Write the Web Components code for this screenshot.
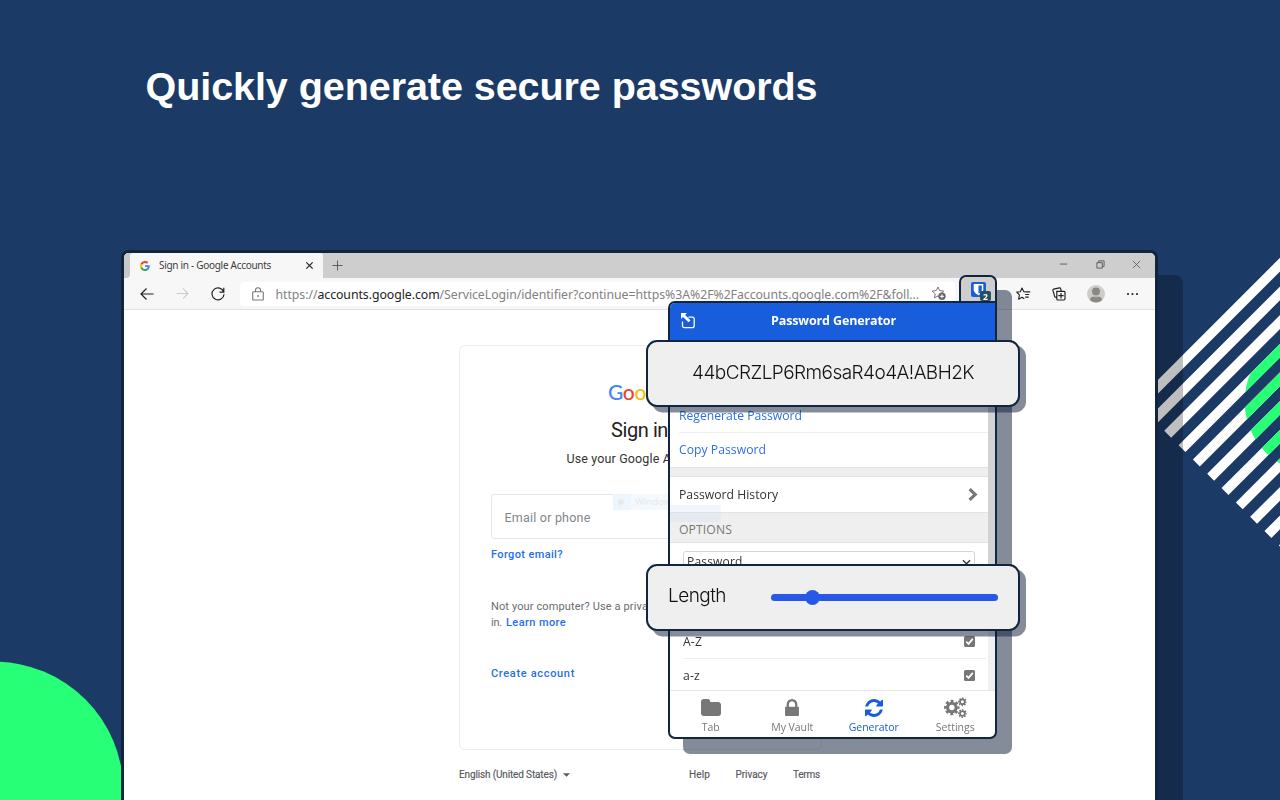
<!DOCTYPE html>
<html lang="en">
<head>
<meta charset="utf-8">
<title>Quickly generate secure passwords</title>
<style>
html,body{margin:0;width:1280px;height:800px;overflow:hidden;background:#1b3a66}
</style>
</head>
<body>
<promo-scene></promo-scene>
<script>
const define = (name, html, setup) => {
  const t = document.createElement('template');
  t.innerHTML = html;
  customElements.define(name, class extends HTMLElement {
    connectedCallback() {
      if (this.shadowRoot) return;
      this.attachShadow({mode: 'open'}).appendChild(document.importNode(t.content, true));
      if (setup) setup(this, this.shadowRoot);
    }
  });
};

/* Spaces its slotted text so that the line has the width given in "w". */
define('fit-text', `<style>:host{display:block;flex:none;white-space:nowrap}span{display:inline-block}</style><span><slot></slot></span>`,
  (el, root) => {
    const natural = root.querySelector('span').getBoundingClientRect().width;
    const n = el.textContent.length;
    el.style.letterSpacing = ((+el.getAttribute('w') - natural) / n) + 'px';
  });

const icons = {
  google: ['0 0 48 48', '<path fill="#ea4335" d="M24 9.5c3.54 0 6.71 1.22 9.21 3.6l6.85-6.85C35.9 2.38 30.47 0 24 0 14.62 0 6.51 5.38 2.56 13.22l7.98 6.19C12.43 13.72 17.74 9.5 24 9.5z"/><path fill="#4285f4" d="M46.98 24.55c0-1.57-.15-3.09-.38-4.55H24v9.02h12.94c-.58 2.96-2.26 5.48-4.78 7.18l7.73 6c4.51-4.18 7.09-10.36 7.09-17.65z"/><path fill="#fbbc05" d="M10.53 28.59c-.48-1.45-.76-2.99-.76-4.59s.27-3.14.76-4.59l-7.98-6.19C.92 16.46 0 20.12 0 24c0 3.88.92 7.54 2.56 10.78l7.97-6.19z"/><path fill="#34a853" d="M24 48c6.48 0 11.93-2.13 15.89-5.81l-7.73-6c-2.15 1.45-4.92 2.3-8.16 2.3-6.26 0-11.57-4.22-13.47-9.91l-7.98 6.19C6.51 42.62 14.62 48 24 48z"/>'],
  close: ['0 0 10 10', '<path d="M1.5 1.5l7 7M8.500 1.500l-7 7" stroke="currentColor" fill="none" stroke-width="1.300"/>'],
  plus: ['0 0 12 12', '<path d="M6 .5v11M.5 6h11" stroke="currentColor" fill="none"/>'],
  min: ['0 0 10 10', '<path d="M1 4.500h8" stroke="currentColor" fill="none"/>'],
  restore: ['0 0 10 10', '<path d="M1 3h6v6H1zM3 3V1h6v6H7" stroke="currentColor" fill="none"/>'],
  x: ['0 0 10 10', '<path d="M1 1l8 8M9 1L1 9" stroke="currentColor" fill="none" stroke-width=".9"/>'],
  back: ['0 0 14 12', '<path d="M13.500 6H1M6.500 .5L1 6l5.500 5.500" stroke="currentColor" fill="none" stroke-width="1.200"/>'],
  fwd: ['0 0 14 12', '<path d="M.5 6H13M7.500 .5L13 6l-5.500 5.500" stroke="currentColor" fill="none" stroke-width="1.200"/>'],
  reload: ['0 0 14 14', '<path d="M12.700 5A6 6 0 1 0 13 7.200M12.800 .8v4.300H8.500" stroke="currentColor" fill="none" stroke-width="1.200"/>'],
  padlock: ['0 0 12 14', '<path d="M1.500 4.800h9a.8.8 0 0 1 .8.800v6.600a.8.8 0 0 1-.8.800h-9a.8.8 0 0 1-.8-.8V5.600a.8.8 0 0 1 .8-.8zM3.500 4.800V3.300a2.500 2.500 0 0 1 5 0v1.500" stroke="currentColor" fill="none" stroke-width="1.100"/><circle cx="6" cy="9" r=".9" fill="currentColor"/>'],
  staradd: ['0 0 15 15', '<path d="M6.500 1l1.700 3.600 4.100.5-3 2.800.8 4-3.600-2-3.600 2 .8-4-3-2.800 4.100-.5z" stroke="currentColor" fill="none" stroke-width="1" stroke-linejoin="round"/><circle cx="10.500" cy="10.300" r="3.700" fill="#666"/><path d="M10.500 8.300v4M8.500 10.300h4" stroke="#fff" stroke-width="1"/>'],
  favs: ['0 0 15 14', '<path d="M9 4.900L7.800 4.700 6 1 4.300 4.700.7 5.100l2.700 2.700-.8 4.400L6 10.200l2.300 1.500M9.200 4.900h5M9.200 7.500h4M9.200 10.100h3.500" stroke="currentColor" fill="none" stroke-width="1.100" stroke-linejoin="round"/>'],
  collect: ['0 0 14 14', '<path d="M4.800 4.300h7.200a1 1 0 0 1 1 1v6.500a1.200 1.200 0 0 1-1.200 1.200H5.800a1 1 0 0 1-1-1zM9 6v5.400M6.300 8.700h5.400M4.500 10.500L2.800 9.900 .9 3.400a1 1 0 0 1 .7-1.200L7.400.9a1 1 0 0 1 1.200.7l.7 2.500" stroke="currentColor" fill="none" stroke-width="1.200"/>'],
  avatar: ['0 0 18 18', '<circle cx="9" cy="9" r="9" fill="#cfcdca"/><circle cx="9" cy="6.400" r="4" fill="#8b8886"/><path d="M3 15.300c0-2.500 1.500-3.600 3-3.600h6c1.500 0 3 1.100 3 3.600A9 9 0 0 1 9 17.300a9 9 0 0 1-6-2z" fill="#8b8886"/>'],
  dots: ['0 0 12 4', '<g fill="currentColor"><circle cx="1.500" cy="2" r="1.100"/><circle cx="6" cy="2" r="1.100"/><circle cx="10.500" cy="2" r="1.100"/></g>'],
  shield: ['0 0 15 15', '<rect width="15" height="15" rx="2" fill="#175ddc"/><path d="M2.700 2h9.600v5.800c0 2.700-2.800 4.300-4.800 5.400C5.500 12.100 2.700 10.500 2.700 7.800z" fill="#fff"/><path d="M7.500 3.400h3.300v4.500c0 1.700-1.500 2.900-3.300 3.800z" fill="#175ddc"/>'],
  popout: ['0 0 16 16', '<path d="M8.500 4.100h3.800a1.900 1.900 0 0 1 1.900 1.900v6.700a1.900 1.900 0 0 1-1.900 1.900H4.400a1.900 1.900 0 0 1-1.900-1.900V8.500" stroke="#fff" fill="none" stroke-width="1.300"/><path d="M1 0h6L5.100 1.900l5.400 5.400-2 2-5.500-5.400L1 6z" fill="#fff"/>'],
  chevron: ['0 0 10 14', '<path d="M1.600 1.600L7.300 7l-5.700 5.400" stroke="currentColor" fill="none" stroke-width="3.100"/>'],
  down: ['0 0 10 6', '<path d="M1 1l4 4 4-4" stroke="currentColor" fill="none" stroke-width="1.500"/>'],
  folder: ['64 128 1664 1408', '<path fill="currentColor" d="M1728 608v704q0 92-66 158t-158 66h-1216q-92 0-158-66t-66-158v-960q0-92 66-158t158-66h320q92 0 158 66t66 158v32h672q92 0 158 66t66 158z"/>'],
  lock: ['320 128 1152 1408', '<path fill="currentColor" d="M640 768h512v-192q0-106-75-181t-181-75-181 75-75 181v192zm832 96v576q0 40-28 68t-68 28h-960q-40 0-68-28t-28-68v-576q0-40 28-68t68-28h32v-192q0-184 132-316t316-132 316 132 132 316v192h32q40 0 68 28t28 68z"/>'],
  refresh: ['0 0 1536 1536', '<path fill="currentColor" d="M1511 928q0 5-1 7-64 268-268 434.5t-478 166.5q-146 0-282.5-55t-243.5-157l-129 129q-19 19-45 19t-45-19-19-45v-448q0-26 19-45t45-19h448q26 0 45 19t19 45-19 45l-137 137q71 66 161 102t187 36q134 0 250-65t186-179q11-17 53-117 8-23 30-23h192q13 0 22.500 9.500t9.500 22.500zm25-800v448q0 26-19 45t-45 19h-448q-26 0-45-19t-19-45 19-45l138-138q-148-137-349-137-134 0-250 65t-186 179q-11 17-53 117-8 23-30 23h-199q-13 0-22.500-9.500t-9.500-22.500v-7q65-268 270-434.500t480-166.500q146 0 284 55.500t245 156.500l130-129q19-19 45-19t45 19 19 45z"/>'],
  cogs: ['0 0 22 20', '<g fill="none" stroke="currentColor"><circle cx="7.500" cy="10" r="4.100" stroke-width="3"/><circle cx="7.500" cy="10" r="6.300" stroke-width="2.200" stroke-dasharray="2.700 2.248" stroke-dashoffset="1.350"/><circle cx="17.600" cy="4.600" r="2.300" stroke-width="1.700"/><circle cx="17.600" cy="4.600" r="3.500" stroke-width="1.400" stroke-dasharray="1.500 1.249" stroke-dashoffset=".75"/><circle cx="17.600" cy="15.800" r="2.300" stroke-width="1.700"/><circle cx="17.600" cy="15.800" r="3.500" stroke-width="1.400" stroke-dasharray="1.500 1.249" stroke-dashoffset=".75"/></g>'],
  caret: ['0 0 8 4', '<path d="M0 0h8L4 4z" fill="currentColor"/>'],
  check: ['0 0 11 11', '<rect width="11" height="11" rx="1.500" fill="#767676"/><path d="M2.300 5.700l2.200 2.200 4.300-5" stroke="#fff" fill="none" stroke-width="1.700"/>']
};
define('ui-icon', `<style>:host{display:block;flex:none}svg{display:block;overflow:visible}</style>`, (el, root) => {
  const [box, body] = icons[el.getAttribute('name')];
  root.innerHTML += `<svg viewBox="${box}" width="${el.getAttribute('w')}" height="${el.getAttribute('h')}">${body}</svg>`;
});

/* Striped square and green discs behind the window. */
define('scene-backdrop', `<style>:host{display:block;width:1280px;height:800px}svg{display:block}</style>
<svg width="1280" height="800" viewBox="0 0 1280 800">
<defs><clipPath id="s"><path id="p"/></clipPath></defs>
<g clip-path="url(#s)"><rect x="1100" y="200" width="180" height="400" fill="#fff"/><circle cx="1317" cy="401.500" r="72.300" fill="#26ff76"/></g>
<circle cx="-5.500" cy="790.500" r="128.800" fill="#26ff76"/></svg>`, (el, root) => {
  let d = '';
  for (let k = 0; k < 12; k++) {
    const x = 1135.600 + 14.320 * k, y = 402.200 + 14.320 * k;
    d += `M${x} ${y}l6.900 6.900l220-220l-6.900-6.900z`;
  }
  root.querySelector('#p').setAttribute('d', d);
});

define('browser-tabs', `<style>
:host{display:flex;height:25px;background:#cecece;font:10px "Noto Sans","Open Sans",sans-serif;color:#3c3c3c}
.edge{width:6px;background:#f7f7f7}.edge i{display:block;height:25px;background:#c8c8c8;border-radius:0 0 4px 0}
.tab{display:flex;align-items:center;width:193px;background:#f7f7f7;border-radius:3px 3px 0 0;box-sizing:border-box;padding:0 9px 0 10px}
fit-text{margin:-1px 0 0 9px}.tab .c{margin-left:auto;color:#222}
.win{margin-left:auto;display:flex;gap:27.500px;padding:7px 14px 0 0;color:#555}.p{margin:7px 0 0 9px;color:#555}
</style><div class="edge"><i></i></div><div class="tab"><ui-icon name="google" w="10" h="10"></ui-icon><fit-text w="112">Sign in - Google Accounts</fit-text><ui-icon class="c" name="close" w="9" h="9"></ui-icon></div>
<ui-icon class="p" name="plus" w="11" h="11"></ui-icon>
<div class="win"><ui-icon name="min" w="9" h="9"></ui-icon><ui-icon name="restore" w="9" h="9"></ui-icon><ui-icon name="x" w="9" h="9"></ui-icon></div>`);

define('browser-toolbar', `<style>
:host{display:flex;align-items:center;height:31px;background:#f7f7f7;border-bottom:1px solid #e2e2e2;box-sizing:content-box;padding-left:15.500px;color:#222}
.url{display:flex;align-items:center;width:715px;height:24px;background:#fff;border-radius:4px;margin-left:15px;box-sizing:border-box;padding:0 8px 0 12px;font:12.300px "Noto Sans","Open Sans",sans-serif;color:#818181}
.url fit-text{margin:1px 0 0 12px}b{font-weight:400;color:#222}
.f{margin-left:22px;color:#ccc}.r{margin-left:22px}.s{margin-left:auto;color:#777}.l{color:#777}
.more{display:flex;align-items:center;gap:21px;margin-left:61px}
</style><ui-icon name="back" w="14" h="12"></ui-icon><ui-icon class="f" name="fwd" w="13" h="11"></ui-icon><ui-icon class="r" name="reload" w="14" h="14"></ui-icon>
<div class="url"><ui-icon class="l" name="padlock" w="12" h="14"></ui-icon><fit-text w="643.500">https://<b>accounts.google.com</b>/ServiceLogin/identifier?continue=https%3A%2F%2Faccounts.google.com%2F&amp;foll...</fit-text><ui-icon class="s" name="staradd" w="16" h="15"></ui-icon></div>
<div class="more"><ui-icon name="favs" w="15" h="14"></ui-icon><ui-icon name="collect" w="14" h="14"></ui-icon><ui-icon name="avatar" w="18" h="18"></ui-icon><ui-icon name="dots" w="13" h="4"></ui-icon></div>`);

define('signin-card', `<style>
:host{display:flex;flex-direction:column;width:363px;height:405px;box-sizing:border-box;border:1px solid #ebecee;border-radius:6px;padding:0 31px;font:12px/16px Roboto,sans-serif;color:#333}
.logo{font:500 21px/24px Lato,sans-serif;color:#4285f4;margin:34px 0 0 117px;display:flex}
.logo i{font-style:normal}.r{color:#ea4335}.y{color:#fbbc05}
h1{font:400 20px/26px Roboto,sans-serif;margin:13px 0 0 120px;color:#222}
.use{margin:8px 0 0 75.500px;font-size:12.500px}
.field{position:relative;height:43px;border:1px solid #e4e6e9;border-radius:3px;margin-top:27px;font-size:12.500px;line-height:45px;padding-left:12.500px;color:#80868b}
.ghost{position:absolute;left:121px;top:-1px;width:88px;height:16px;background:#f4f9fe;color:#e6e9ec;font:9.500px/16px "Noto Sans",sans-serif;display:flex;align-items:center}
.ghost i{width:18px;height:16px;background:radial-gradient(circle at 8px 8px,#e6e9ec 2.500px,#edf6fe 3.200px);margin-right:4px}
.blue{color:#1f71e6;font-weight:500}
.forgot{margin-top:8px;font-size:11px}.priv{margin-top:36px;font-size:11px;color:#6a6d71;display:flex;gap:4px}.priv+.priv{margin-top:0}
.create{margin-top:35px;font-size:11px}
</style>
<div class="logo"><fit-text w="38">G<i class="r">o</i><i class="y">o</i></fit-text></div>
<h1><fit-text w="57">Sign in</fit-text></h1>
<div class="use"><fit-text w="104.500">Use your Google A</fit-text></div>
<div class="field"><fit-text w="86">Email or phone</fit-text><div class="ghost"><i></i>Window</div></div>
<fit-text class="forgot blue" w="72">Forgot email?</fit-text>
<div class="priv"><fit-text w="157">Not your computer? Use a priva</fit-text></div>
<div class="priv"><fit-text w="11">in.</fit-text><fit-text class="blue" w="60">Learn more</fit-text></div>
<fit-text class="create blue" w="84">Create account</fit-text>`);

define('signin-page', `<style>
:host{display:block;padding:35px 0 0 335px}
footer{display:flex;align-items:center;font:10px/12px Roboto,sans-serif;color:#55585c;margin-top:19px;-webkit-text-stroke:.15px #55585c}
.c{margin-left:6px}.h{margin-left:119px}.p{margin-left:25.500px}
</style><signin-card></signin-card>
<footer><fit-text w="98">English (United States)</fit-text><ui-icon class="c" name="caret" w="7" h="4"></ui-icon><fit-text class="h" w="21">Help</fit-text><fit-text class="p" w="32">Privacy</fit-text><fit-text class="p" w="27">Terms</fit-text></footer>`);

define('browser-window', `<style>
:host{display:block;box-sizing:border-box;width:1037px;height:570px;background:#fff;border:3px solid #12253f;border-radius:8px;overflow:hidden}
</style><browser-tabs></browser-tabs><browser-toolbar></browser-toolbar><signin-page></signin-page>`);

define('list-row', `<style>
:host{display:flex;align-items:center;box-sizing:border-box;height:34.500px;color:#333;padding:1px 11px 0 0}
:host([link]){color:#2f6fe0}
::slotted(ui-icon){margin-left:auto;color:#777}
</style><slot></slot>`);

define('nav-item', `<style>
:host{display:flex;flex-direction:column;align-items:center;flex:1;color:#777;font:10.500px/14px "Open Sans",sans-serif}
:host([active]){color:#175ddc}
.i{height:21px;display:flex;align-items:center;margin-top:6px}.t{margin-top:2px}
</style><div class="i"><slot name="icon"></slot></div><div class="t"><slot></slot></div>`);

define('generator-popup', `<style>
:host{display:flex;flex-direction:column;box-sizing:border-box;width:329px;height:438px;border:2px solid #12263f;border-radius:7px 0 7px 7px;overflow:hidden;background:#fff;font:12.200px/16px "Open Sans",sans-serif}
header{display:flex;align-items:center;height:40px;flex:none;background:#175ddc;color:#fff;font-weight:700;font-size:12.500px;padding:0 0 4px 10px;box-sizing:border-box}
header fit-text{margin-left:75px}
.body{display:flex;height:347px;flex:none}
.list{flex:1;min-width:0}
.bar{width:7px;background:#f0f0f0}.bar i{display:block;height:245px;background:#d2d2d2}
.value{height:55px}
list-row{margin-left:9px}.line{border-bottom:1px solid #eee}
.top{padding-top:3px}
.gap{height:10px;background:#efefef;border:solid #e2e2e2;border-width:1px 0;box-sizing:border-box}
.head{position:relative;height:31px;background:#efefef;border:solid #e2e2e2;border-width:1px 0;box-sizing:border-box;padding:9px 0 0 9px;color:#777;line-height:16px}
.head i{position:absolute;left:0;top:-8px;width:51px;height:17px;background:rgba(200,220,245,.25)}
.opt{padding:0 2px 0 4px}
.select{display:flex;justify-content:space-between;height:18px;border:1px solid #d5d5d5;border-radius:3px;margin:8px 11px 0 9px;padding:2px 3px 0 3px;box-sizing:border-box;color:#333;font-size:12px}
.select ui-icon{margin-top:5px}
.hidden{height:55.500px}
.h{padding-right:10px}.opt list-row.line{padding-top:2px}.opt list-row.last{padding-top:0}
nav{display:flex;flex:1;border-top:1px solid #e6e6e6;margin-right:-1px}
</style>
<header><ui-icon name="popout" w="16" h="16"></ui-icon><fit-text w="125">Password Generator</fit-text></header>
<div class="body"><div class="list">
<div class="value"></div>
<list-row link class="line top"><fit-text w="123">Regenerate Password</fit-text></list-row>
<list-row link><fit-text w="87">Copy Password</fit-text></list-row>
<div class="gap"></div>
<list-row class="h"><fit-text w="99">Password History</fit-text><ui-icon name="chevron" w="10" h="15"></ui-icon></list-row>
<div class="head"><i></i><fit-text w="53">OPTIONS</fit-text></div>
<div class="opt">
<div class="select"><fit-text w="55.500">Password</fit-text><ui-icon name="down" w="9" h="6"></ui-icon></div>
<div class="hidden"></div>
<list-row class="line"><fit-text w="19">A-Z</fit-text><ui-icon name="check" w="11" h="11"></ui-icon></list-row>
<list-row class="last"><fit-text w="17">a-z</fit-text><ui-icon name="check" w="11" h="11"></ui-icon></list-row>
</div></div><div class="bar"><i></i></div></div>
<nav><nav-item><ui-icon slot="icon" name="folder" w="20" h="17"></ui-icon><fit-text w="18">Tab</fit-text></nav-item>
<nav-item><ui-icon slot="icon" name="lock" w="14" h="17"></ui-icon><fit-text w="42">My Vault</fit-text></nav-item>
<nav-item active><ui-icon slot="icon" name="refresh" w="18" h="18"></ui-icon><fit-text w="50">Generator</fit-text></nav-item>
<nav-item><ui-icon slot="icon" name="cogs" w="23" h="21"></ui-icon><fit-text w="39">Settings</fit-text></nav-item></nav>`);

/* Toolbar button of the extension, joined to the popup. */
define('extension-tab', `<style>
:host{display:block;box-sizing:border-box;width:38px;height:28px;background:#cecece;border:2px solid #12263f;border-bottom:0;border-radius:7px 7px 0 0;padding:5px 0 0 10px}
.w{position:relative;width:15px}
b{position:absolute;left:9px;top:9px;width:11px;height:10px;border-radius:2px;background:#26505f;color:#fff;font:700 8.500px/11px "Open Sans",sans-serif;text-align:center}
</style><div class="w"><ui-icon name="shield" w="15" h="15"></ui-icon><b>2</b></div>`);

define('callout-box', `<style>
:host{display:flex;align-items:center;box-sizing:border-box;width:374px;height:67px;background:#efefef;border:2px solid #12263f;border-radius:11px;box-shadow:6px 5.500px 0 rgba(9,25,51,.5);color:#111;font:300 19px/24px Inter,"Liberation Sans",sans-serif}
</style><slot></slot>`);

define('range-slider', `<style>
:host{display:flex;align-items:center;width:227.500px;height:16px}
.track{flex:1;height:6.500px;border-radius:4px;background:#2859e6;display:flex;align-items:center}
i{width:15px;height:15px;border-radius:50%;background:#2859e6;margin-left:34.500px}
</style><div class="track"><i></i></div>`);

define('promo-scene', `<style>
:host{display:block;position:relative;width:1280px;height:800px;overflow:hidden;background:#1b3a66}
h1{position:absolute;left:145.500px;top:61px;margin:0;font:700 39.500px/50px "Liberation Sans",Arial,sans-serif;color:#fff}
scene-backdrop,browser-window,.pop,callout-box,.shade{position:absolute}
.shade{left:1150px;top:275px;width:33px;height:540px;border-radius:8px;background:rgba(0,0,0,.25)}
scene-backdrop{left:0;top:0}
browser-window{left:121px;top:250px}
.pop{left:668px;top:275px;display:flex;flex-direction:column;align-items:flex-end;filter:drop-shadow(15px 15px 0 rgba(9,25,51,.5))}
generator-popup{margin-top:-2px}
callout-box{left:646px}.a{top:340px;padding-left:44px}.b{top:564px;padding-left:20px}
.a fit-text{margin-top:-2px}
.b range-slider{margin:0 0 0 44.500px}
.b fit-text{margin-top:-3px}
</style>
<scene-backdrop></scene-backdrop>
<h1><fit-text w="672">Quickly generate secure passwords</fit-text></h1>
<div class="shade"></div>
<browser-window></browser-window>
<div class="pop"><extension-tab></extension-tab><generator-popup></generator-popup></div>
<callout-box class="a"><fit-text w="282">44bCRZLP6Rm6saR4o4A!ABH2K</fit-text></callout-box>
<callout-box class="b"><fit-text w="58">Length</fit-text><range-slider></range-slider></callout-box>`);
</script>
</body>
</html>
